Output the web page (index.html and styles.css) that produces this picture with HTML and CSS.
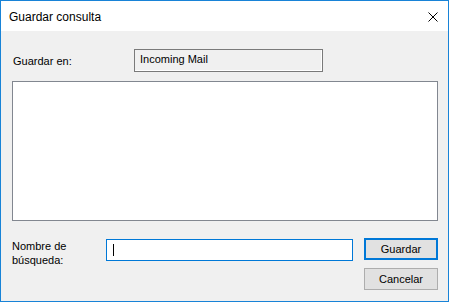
FILE: index.html
```html
<!DOCTYPE html>
<html lang="es">
<head>
  <meta charset="UTF-8">
  <title>Guardar consulta</title>
  <link rel="stylesheet" href="styles.css">
</head>
<body>

  <div class="window">
    <div class="titlebar">
      <span class="title">Guardar consulta</span>
      <span class="close-btn">
        <svg width="10" height="10" viewBox="0 0 10 10">
          <path d="M0.5 0.5 L9.5 9.5 M9.5 0.5 L0.5 9.5" stroke="#000" stroke-width="1" fill="none"/>
        </svg>
      </span>
    </div>

    <div class="content">
      <div class="row-location">
        <span class="label">Guardar en:</span>
        <div class="readonly-box">Incoming Mail</div>
      </div>

      <div class="list-box"></div>

      <div class="row-name">
        <span class="label name-label">Nombre de<br>búsqueda:</span>
        <div class="text-input"><span class="caret"></span></div>
        <div class="buttons">
          <button class="btn btn-default">Guardar</button>
          <button class="btn">Cancelar</button>
        </div>
      </div>
    </div>
  </div>

</body>
</html>
```

FILE: styles.css
```css
body {
  margin: 0;
  font-family: "Liberation Sans", Arial, sans-serif;
  font-size: 11px;
  color: #000;
}

.window {
  width: 449px;
  height: 302px;
  box-sizing: border-box;
  border: 1px solid #1883d7;
  background: #f0f0f0;
  display: flex;
  flex-direction: column;
}

.titlebar {
  height: 30px;
  background: #fff;
  display: flex;
  align-items: center;
  justify-content: space-between;
  padding: 0 10px 0 8px;
}

.title {
  font-size: 12px;
  padding-top: 1px;
}

.close-btn {
  display: flex;
  margin-top: 1px;
}

.content {
  padding: 18px 10px 0 11px;
}

.row-location {
  display: flex;
  align-items: center;
  height: 23px;
}

.row-location .label {
  width: 121px;
  padding-left: 1px;
}

.readonly-box {
  width: 189px;
  height: 23px;
  box-sizing: border-box;
  border: 1px solid #7a7a7a;
  box-shadow: inset -1px -1px 0 #fff;
  padding: 3px 0 0 5px;
}

.list-box {
  margin-top: 9px;
  height: 140px;
  box-sizing: border-box;
  background: #fff;
  border: 1px solid #828790;
}

.row-name {
  display: flex;
  margin-top: 17px;
}

.name-label {
  width: 94px;
  line-height: 14px;
  padding-top: 1px;
}

.text-input {
  width: 247px;
  height: 22px;
  margin-top: 1px;
  box-sizing: border-box;
  border: 1px solid #0078d7;
  background: #fff;
  padding: 4px 0 0 6px;
}

.caret {
  display: block;
  width: 1px;
  height: 12px;
  background: #000;
}

.buttons {
  display: flex;
  flex-direction: column;
  gap: 8px;
  margin-left: 11px;
}

.btn {
  width: 74px;
  height: 22px;
  box-sizing: border-box;
  border: 1px solid #adadad;
  background: #e1e1e1;
  font-family: "Liberation Sans", Arial, sans-serif;
  font-size: 11px;
  color: #000;
  padding: 0;
}

.btn-default {
  border: 2px solid #0078d7;
}
```
